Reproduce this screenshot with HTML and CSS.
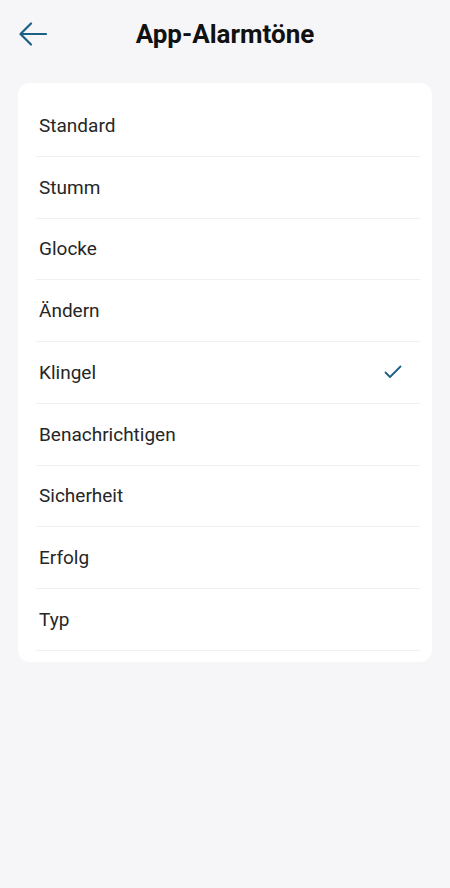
FILE: index.html
```html
<!DOCTYPE html>
<html lang="de">
<head>
    <meta charset="UTF-8">
    <meta name="viewport" content="width=device-width, initial-scale=1.0">
    <title>App-Alarmtöne</title>
    <link rel="stylesheet" href="styles.css">
</head>
<body>
    <header class="topbar">
        <button class="back" aria-label="Zurück">
            <svg width="28" height="24" viewBox="0 0 28 24" fill="none" stroke="currentColor" stroke-width="2.2" stroke-linecap="round" stroke-linejoin="round">
                <path d="M27 12H2"/>
                <path d="M12 1.5L1.5 12L12 22.5"/>
            </svg>
        </button>
        <h1>App-Alarmtöne</h1>
    </header>

    <div class="card">
        <ul class="options">
            <li>Standard</li>
            <li>Stumm</li>
            <li>Glocke</li>
            <li>Ändern</li>
            <li class="selected">Klingel
                <svg class="check" width="18" height="14" viewBox="0 0 18 14" fill="none" stroke="currentColor" stroke-width="1.8" stroke-linecap="round" stroke-linejoin="round">
                    <path d="M1.5 7.5L6 12L16.5 1.5"/>
                </svg>
            </li>
            <li>Benachrichtigen</li>
            <li>Sicherheit</li>
            <li>Erfolg</li>
            <li>Typ</li>
        </ul>
    </div>
</body>
</html>
```

FILE: styles.css
```css
body {
    font-family: Roboto, "Liberation Sans", sans-serif;
    margin: 0;
    background: #f6f6f8;
    color: #262626;
    width: 450px;
    height: 888px;
}
.topbar {
    position: relative;
    height: 68px;
    display: flex;
    align-items: center;
    justify-content: center;
}
.back {
    position: absolute;
    left: 19px;
    top: 22px;
    background: none;
    border: none;
    padding: 0;
    color: #1d5f87;
    display: flex;
}
h1 {
    margin: 0;
    font-size: 26px;
    font-weight: 700;
    color: #111;
}
.card {
    background: white;
    margin: 15px 18px 0;
    border-radius: 12px;
    padding: 12px 12px 11px 18px;
}
.options {
    list-style: none;
    margin: 0;
    padding: 0;
}
.options li {
    height: 60.75px;
    border-bottom: 1px solid #f0f0f2;
    display: flex;
    align-items: center;
    justify-content: space-between;
    padding: 0 18px 0 3px;
    font-size: 19px;
}
.check {
    color: #1d5f87;
}
```
